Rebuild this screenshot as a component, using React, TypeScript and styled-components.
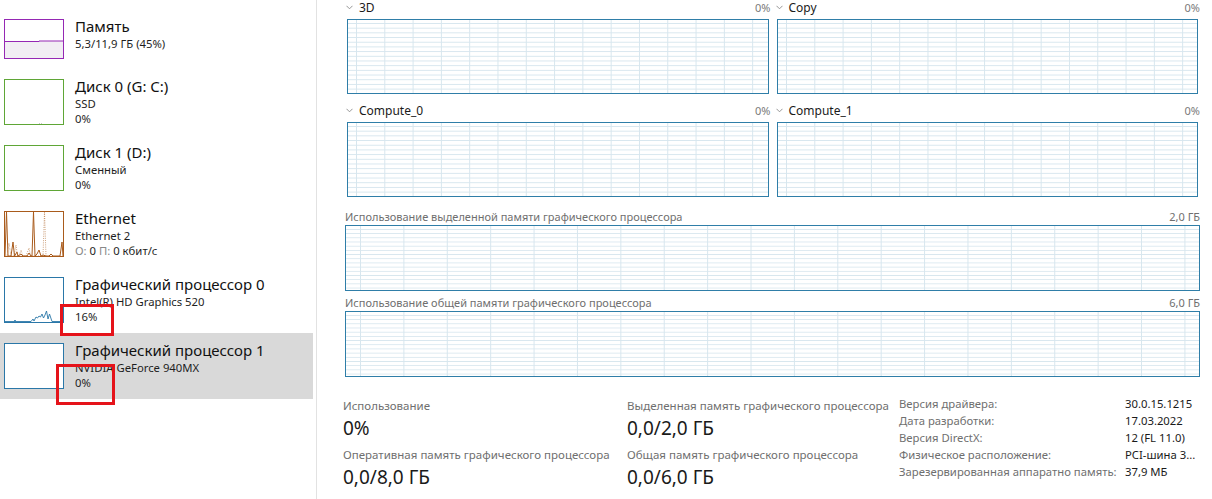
import { Fragment } from "react";
import styled, { createGlobalStyle, css } from "styled-components";

const GlobalStyle = createGlobalStyle`
  html, body {
    margin: 0;
    padding: 0;
    background: #fff;
  }
  body {
    font-family: "Segoe UI", "Noto Sans", "DejaVu Sans", sans-serif;
    color: #1a1a1a;
    overflow: hidden;
  }
`;

const FONT_TEXT = `"Segoe UI", "Noto Sans", "DejaVu Sans", sans-serif`;

const SRoot = styled.div`
  position: relative;
  width: 1212px;
  height: 499px;
  display: flex;
  overflow: hidden;
  font-family: ${FONT_TEXT};
`;

/* ---------- sidebar ---------- */

const SSidebar = styled.aside`
  box-sizing: border-box;
  width: 317px;
  flex: none;
  border-right: 1px solid #e2e2e2;
  padding-top: 9px;
  display: flex;
  flex-direction: column;
`;

const SSideItem = styled.div<{ $selected?: boolean; $compact?: boolean }>`
  box-sizing: border-box;
  height: ${(p) => (p.$compact ? 60 : 66)}px;
  margin-right: 3px;
  padding: 10px 0 0 4px;
  display: grid;
  grid-template-columns: 60px 1fr;
  column-gap: 11px;
  align-items: start;
  background: ${(p) => (p.$selected ? "#d9d9d9" : "transparent")};
`;

const SThumb = styled.div<{ $color: string; $h: number }>`
  position: relative;
  box-sizing: border-box;
  width: 60px;
  height: ${(p) => p.$h}px;
  border: 1px solid ${(p) => p.$color};
  background: #fff;
  overflow: hidden;

  svg {
    position: absolute;
    inset: 0;
    width: 100%;
    height: 100%;
  }
`;

const SSideText = styled.div`
  display: flex;
  flex-direction: column;
  margin-top: -3px;
  white-space: nowrap;
`;

const SSideTitle = styled.div`
  font-size: 15px;
  line-height: 20px;
  color: #111;
`;

const SSideSub = styled.div`
  font-size: 11.3px;
  line-height: 15px;
  color: #1e1e1e;
`;

const SMuted = styled.span`
  color: #888;
`;

const SMark = styled.div<{ $x: number; $y: number; $w: number; $h: number }>`
  position: absolute;
  box-sizing: border-box;
  left: ${(p) => p.$x}px;
  top: ${(p) => p.$y}px;
  width: ${(p) => p.$w}px;
  height: ${(p) => p.$h}px;
  border: 3px solid #e5131a;
  pointer-events: none;
`;

/* ---------- main pane ---------- */

const SMain = styled.main`
  flex: 1;
  min-width: 0;
  padding: 0 12px 0 28px;
  display: flex;
  flex-direction: column;
`;

const SEngineGrid = styled.div`
  display: grid;
  grid-template-columns: 1fr 1fr;
  column-gap: 4px;
  row-gap: 9px;
`;

const SEngine = styled.div`
  display: flex;
  flex-direction: column;
`;

const SEngineHeader = styled.div`
  box-sizing: border-box;
  height: 19px;
  padding-top: 1px;
  display: flex;
  align-items: flex-start;
  font-size: 12px;
  line-height: 13px;
`;

const SEngineName = styled.span`
  display: flex;
  align-items: center;
  gap: 6px;
  color: #1a1a1a;
  flex: 1;

  svg {
    width: 7px;
    height: 5px;
    margin-left: 1px;
  }
`;

const SEngineValue = styled.span`
  color: #7a7a7a;
  font-size: 11px;
`;

const chartGrid = css<{ $cellW: number; $cellH: number; $offX: number }>`
  box-sizing: border-box;
  border: 1px solid #2f7ea8;
  background-color: #fff;
  background-image:
    linear-gradient(to right, #d7e6ee 1px, transparent 1px),
    linear-gradient(to bottom, #d7e6ee 1px, transparent 1px);
  background-size:
    ${(p) => p.$cellW}px 100%,
    100% ${(p) => p.$cellH}px;
  background-position:
    ${(p) => p.$offX}px 0,
    0 3px;
`;

const SSmallChart = styled.div<{ $cellW: number; $cellH: number; $offX: number }>`
  ${chartGrid};
  height: 75px;
  margin: 0 2px;
`;

const SMemSection = styled.section`
  margin-top: 13px;
  display: flex;
  flex-direction: column;
`;

const SMemLabel = styled.div`
  display: flex;
  justify-content: space-between;
  font-size: 11px;
  line-height: 14px;
  color: #6f6f6f;
  margin-top: 5px;

  &:first-child {
    margin-top: 0;
  }
`;

const SBigChart = styled.div<{ $cellW: number; $cellH: number; $offX: number }>`
  ${chartGrid};
  height: 66px;
  margin-top: 1px;
`;

/* ---------- stats ---------- */

const SStats = styled.section`
  margin: 21px 0 0 -2px;
  display: grid;
  grid-template-columns: 284px 272px 1fr;
`;

const SStatCol = styled.div`
  display: flex;
  flex-direction: column;
  row-gap: 5px;
`;

const SStat = styled.div`
  display: flex;
  flex-direction: column;
  white-space: nowrap;
`;

const SStatLabel = styled.div`
  font-size: 11.5px;
  line-height: 16px;
  color: #6f6f6f;
`;

const SStatValue = styled.div`
  font-size: 19px;
  line-height: 28px;
  color: #1a1a1a;
`;

const SProps = styled.dl`
  margin: -3px 0 0;
  display: grid;
  grid-template-columns: 226px auto;
  grid-auto-rows: 17px;
  align-items: center;
  font-size: 11.3px;
  white-space: nowrap;

  dt {
    color: #6f6f6f;
  }
  dd {
    margin: 0;
    color: #1a1a1a;
  }
`;

/* ---------- drawings ---------- */

function Chevron() {
  return (
    <svg viewBox="0 0 7 5" fill="none">
      <polyline points="0.5,0.8 3.5,3.8 6.5,0.8" stroke="#8a8a8a" strokeWidth="0.9" />
    </svg>
  );
}

function MemoryGraph() {
  return (
    <svg viewBox="0 0 58 38" preserveAspectRatio="none">
      <path d="M0,21.5 L34,21.5 L34,21 L58,21 L58,38 L0,38 Z" fill="#f1eef3" />
      <polyline points="0,21.5 34,21.5 34,21 58,21" fill="none" stroke="#9528b4" strokeWidth="1" />
    </svg>
  );
}

function DiskDots() {
  return (
    <svg viewBox="0 0 58 44" preserveAspectRatio="none">
      <line x1="34" y1="43.5" x2="38" y2="43.5" stroke="#c8c8c8" strokeWidth="1" strokeDasharray="1 1" />
    </svg>
  );
}

function EthernetGraph() {
  const c = "#a95b1c";
  return (
    <svg viewBox="0 0 58 44" preserveAspectRatio="none">
      <polyline
        fill="none"
        stroke={c}
        strokeWidth="1"
        points="0,44 1.5,0 3,44 6,44 8,30 9.5,44 12,40 13,44 16,42 18,44 22,44 24,41 26,44 27,44 28.5,0 30,44 32,42 34,38 36,44 38,43 41,44 44,44 46,42 48,44 55,44 57,30 58,44"
      />
      <polyline
        fill="none"
        stroke={c}
        strokeWidth="0.8"
        strokeOpacity="0.7"
        strokeDasharray="1 1.2"
        points="9,44 11,33 12.5,44 21,44 24,36 25.5,44 38,44 39.5,0 41,44"
      />
      <polyline
        fill="none"
        stroke={c}
        strokeWidth="0.8"
        strokeOpacity="0.7"
        strokeDasharray="0.6 0.8"
        points="2,44 4,31 6,44 14,44 16,38 18,44"
      />
    </svg>
  );
}

function GpuGraph() {
  const c = "#2a77a8";
  return (
    <svg viewBox="0 0 58 44" preserveAspectRatio="none">
      <polyline
        fill="none"
        stroke={c}
        strokeWidth="0.9"
        points="0,43.5 26,43.5 28,41 29,43 31,39 32.5,40 34,38 35.5,39 37,36 38.5,40 40,37 41.5,33 43,41 44.5,36 45.5,39 47,43.5 58,43.5"
      />
      <line x1="9" y1="42.5" x2="11" y2="42.5" stroke={c} strokeWidth="0.8" />
    </svg>
  );
}

/* ---------- data ---------- */

const engines = [
  { name: "3D", value: "0%" },
  { name: "Copy", value: "0%" },
  { name: "Compute_0", value: "0%" },
  { name: "Compute_1", value: "0%" },
];

const props: [string, string][] = [
  ["Версия драйвера:", "30.0.15.1215"],
  ["Дата разработки:", "17.03.2022"],
  ["Версия DirectX:", "12 (FL 11.0)"],
  ["Физическое расположение:", "PCI-шина 3..."],
  ["Зарезервированная аппаратно память:", "37,9 МБ"],
];

export default function App() {
  return (
    <>
      <GlobalStyle />
      <SRoot>
        <SSidebar>
          <SSideItem $compact>
            <SThumb $color="#9528b4" $h={40}>
              <MemoryGraph />
            </SThumb>
            <SSideText>
              <SSideTitle>Память</SSideTitle>
              <SSideSub>5,3/11,9 ГБ (45%)</SSideSub>
            </SSideText>
          </SSideItem>

          <SSideItem>
            <SThumb $color="#5fa636" $h={46}>
              <DiskDots />
            </SThumb>
            <SSideText>
              <SSideTitle>Диск 0 (G: C:)</SSideTitle>
              <SSideSub>SSD</SSideSub>
              <SSideSub>0%</SSideSub>
            </SSideText>
          </SSideItem>

          <SSideItem>
            <SThumb $color="#5fa636" $h={46} />
            <SSideText>
              <SSideTitle>Диск 1 (D:)</SSideTitle>
              <SSideSub>Сменный</SSideSub>
              <SSideSub>0%</SSideSub>
            </SSideText>
          </SSideItem>

          <SSideItem>
            <SThumb $color="#a95b1c" $h={46}>
              <EthernetGraph />
            </SThumb>
            <SSideText>
              <SSideTitle>Ethernet</SSideTitle>
              <SSideSub>Ethernet 2</SSideSub>
              <SSideSub>
                <SMuted>О:</SMuted> 0 <SMuted>П:</SMuted> 0 кбит/с
              </SSideSub>
            </SSideText>
          </SSideItem>

          <SSideItem>
            <SThumb $color="#2a77a8" $h={46}>
              <GpuGraph />
            </SThumb>
            <SSideText>
              <SSideTitle>Графический процессор 0</SSideTitle>
              <SSideSub>Intel(R) HD Graphics 520</SSideSub>
              <SSideSub>16%</SSideSub>
            </SSideText>
          </SSideItem>

          <SSideItem $selected>
            <SThumb $color="#2a77a8" $h={46} />
            <SSideText>
              <SSideTitle>Графический процессор 1</SSideTitle>
              <SSideSub>NVIDIA GeForce 940MX</SSideSub>
              <SSideSub>0%</SSideSub>
            </SSideText>
          </SSideItem>
        </SSidebar>

        <SMain>
          <SEngineGrid>
            {engines.map((e) => (
              <SEngine key={e.name}>
                <SEngineHeader>
                  <SEngineName>
                    <Chevron />
                    {e.name}
                  </SEngineName>
                  <SEngineValue>{e.value}</SEngineValue>
                </SEngineHeader>
                <SSmallChart $cellW={28.3} $cellH={4.7} $offX={8} />
              </SEngine>
            ))}
          </SEngineGrid>

          <SMemSection>
            <SMemLabel>
              <span>Использование выделенной памяти графического процессора</span>
              <span>2,0 ГБ</span>
            </SMemLabel>
            <SBigChart $cellW={43.4} $cellH={4.2} $offX={14} />
            <SMemLabel>
              <span>Использование общей памяти графического процессора</span>
              <span>6,0 ГБ</span>
            </SMemLabel>
            <SBigChart $cellW={43.4} $cellH={4.2} $offX={14} />
          </SMemSection>

          <SStats>
            <SStatCol>
              <SStat>
                <SStatLabel>Использование</SStatLabel>
                <SStatValue>0%</SStatValue>
              </SStat>
              <SStat>
                <SStatLabel>Оперативная память графического процессора</SStatLabel>
                <SStatValue>0,0/8,0 ГБ</SStatValue>
              </SStat>
            </SStatCol>
            <SStatCol>
              <SStat>
                <SStatLabel>Выделенная память графического процессора</SStatLabel>
                <SStatValue>0,0/2,0 ГБ</SStatValue>
              </SStat>
              <SStat>
                <SStatLabel>Общая память графического процессора</SStatLabel>
                <SStatValue>0,0/6,0 ГБ</SStatValue>
              </SStat>
            </SStatCol>
            <SProps>
              {props.map(([k, v]) => (
                <Fragment key={k}>
                  <dt>{k}</dt>
                  <dd>{v}</dd>
                </Fragment>
              ))}
            </SProps>
          </SStats>
        </SMain>

        <SMark $x={60} $y={304} $w={54} $h={32} />
        <SMark $x={56} $y={364} $w={59} $h={41} />
      </SRoot>
    </>
  );
}
